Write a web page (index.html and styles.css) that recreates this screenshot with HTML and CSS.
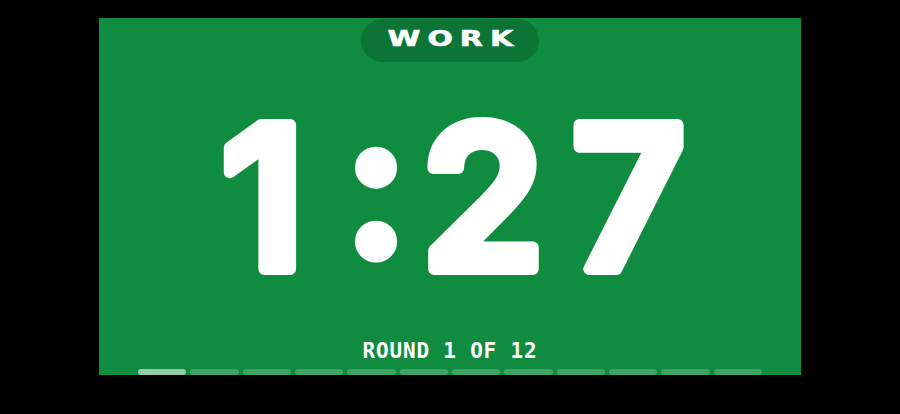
FILE: index.html
```html
<!DOCTYPE html>
<html lang="en">
<head>
<meta charset="utf-8">
<title>Interval timer</title>
<link rel="stylesheet" href="styles.css">
</head>
<body>
<main class="screen">
  <div class="phase"><span class="phase-label">WORK</span></div>
  <svg class="clock" viewBox="0 0 702 277" width="702" height="277" aria-label="1:27">
    <text class="digits" y="207"><tspan x="163.5" y="207">1</tspan><tspan class="colon" x="277" y="193">:</tspan><tspan x="384" y="207">2</tspan><tspan x="529.5" y="207">7</tspan></text>
  </svg>
  <div class="round">ROUND 1 OF 12</div>
  <div class="progress">
    <span class="seg active"></span>
    <span class="seg"></span>
    <span class="seg"></span>
    <span class="seg"></span>
    <span class="seg"></span>
    <span class="seg"></span>
    <span class="seg"></span>
    <span class="seg"></span>
    <span class="seg"></span>
    <span class="seg"></span>
    <span class="seg"></span>
    <span class="seg"></span>
  </div>
</main>
</body>
</html>
```
FILE: styles.css
```css
html, body {
  margin: 0;
  background: #000;
}

body {
  padding-top: 18px;
  height: 414px;
  box-sizing: border-box;
  overflow: hidden;
}

.screen {
  width: 702px;
  height: 357px;
  margin: 0 auto;
  background: #108c40;
  display: flex;
  flex-direction: column;
  align-items: center;
  padding-top: 1px;
  box-sizing: border-box;
  overflow: hidden;
}

.phase {
  width: 178px;
  height: 43px;
  border-radius: 22px;
  background: #0c7535;
  display: flex;
  align-items: center;
  justify-content: center;
  box-sizing: border-box;
  padding-bottom: 3px;
  color: #fff;
  font-family: "DejaVu Sans", sans-serif;
  font-weight: 700;
  font-size: 21px;
  flex-shrink: 0;
}

.phase-label {
  display: inline-block;
  letter-spacing: 5px;
  padding-left: 5px;
  transform: scaleX(1.42);
  -webkit-text-stroke: 0.6px #fff;
}

.clock {
  display: block;
  flex-shrink: 0;
}

.digits {
  font-family: Inter, "DejaVu Sans", sans-serif;
  font-weight: 600;
  font-size: 198px;
  fill: #fff;
  stroke: #fff;
  stroke-width: 12px;
  stroke-linejoin: round;
  stroke-linecap: round;
  text-anchor: middle;
}

.digits .colon {
  stroke-width: 11px;
}

.round {
  color: #fff;
  font-family: "DejaVu Sans Mono", monospace;
  font-weight: 700;
  font-size: 21px;
  line-height: 24px;
  letter-spacing: 0.8px;
  flex-shrink: 0;
}

.progress {
  width: 624px;
  height: 6px;
  margin-top: 6px;
  display: flex;
  gap: 4px;
  flex-shrink: 0;
}

.seg {
  flex: 1;
  border-radius: 3px;
  background: rgba(255, 255, 255, 0.2);
}

.seg.active {
  background: rgba(255, 255, 255, 0.55);
}
```
